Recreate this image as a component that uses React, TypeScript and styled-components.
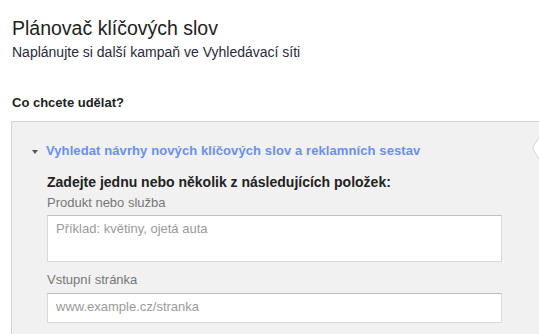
import React from "react";
import styled, { createGlobalStyle } from "styled-components";

const Global = createGlobalStyle`
  html, body { margin: 0; padding: 0; background: #fff; }
  body { font-family: Arial, "Liberation Sans", sans-serif; overflow: hidden; }
`;

const Page = styled.div`
  width: 539px;
  height: 334px;
  overflow: hidden;
  position: relative;
  padding: 17px 0 0 12px;
  box-sizing: border-box;
`;

const Title = styled.h1`
  margin: 0;
  font-size: 19.5px;
  font-weight: normal;
  color: #222;
  line-height: 22px;
`;

const Subtitle = styled.div`
  margin-top: 5px;
  font-size: 14px;
  color: #2a2a3a;
  line-height: 16px;
`;

const Question = styled.div`
  margin-top: 35px;
  font-size: 13px;
  font-weight: bold;
  color: #222;
  line-height: 16px;
`;

const Panel = styled.div`
  margin-top: 10px;
  margin-left: -1px;
  width: 560px;
  height: 260px;
  background: #f1f1f1;
  border: 1px solid #d4d4d4;
  box-sizing: border-box;
  padding: 21px 0 0 20px;
`;

const Toggle = styled.div`
  display: flex;
  align-items: center;
  gap: 8px;
  font-size: 13px;
  font-weight: bold;
  letter-spacing: 0.1px;
  color: #6b8ef5;
  line-height: 16px;
`;

const Caret = styled.span`
  width: 0;
  height: 0;
  border-left: 3.5px solid transparent;
  border-right: 3.5px solid transparent;
  border-top: 4px solid #555;
  margin-top: 1px;
`;

const Body = styled.div`
  padding-left: 15px;
  margin-top: 15px;
  display: flex;
  flex-direction: column;
`;

const Instruction = styled.div`
  font-size: 14px;
  font-weight: bold;
  color: #222;
  line-height: 16px;
`;

const Label = styled.div<{ $mt: number }>`
  margin-top: ${(p) => p.$mt}px;
  font-size: 13px;
  color: #777;
  line-height: 16px;
`;

const Field = styled.div<{ $h: number }>`
  margin-top: ${(p) => (p.$h > 40 ? 4 : 5)}px;
  width: 455px;
  height: ${(p) => p.$h}px;
  box-sizing: border-box;
  background: #fff;
  border: 1px solid #d9d9d9;
  border-top-color: #c0c0c0;
  padding: 5px 8px;
  font-size: 13px;
  color: #9a9a9a;
  line-height: 16px;
`;

const Pointer = styled.svg`
  position: absolute;
  right: 0;
  top: 137px;
`;

export default function App() {
  return (
    <>
      <Global />
      <Page>
        <Title>Plánovač klíčových slov</Title>
        <Subtitle>Naplánujte si další kampaň ve Vyhledávací síti</Subtitle>
        <Question>Co chcete udělat?</Question>
        <Panel>
          <Toggle>
            <Caret />
            Vyhledat návrhy nových klíčových slov a reklamních sestav
          </Toggle>
          <Body>
            <Instruction>Zadejte jednu nebo několik z následujících položek:</Instruction>
            <Label $mt={5}>Produkt nebo služba</Label>
            <Field $h={47}>Příklad: květiny, ojetá auta</Field>
            <Label $mt={10}>Vstupní stránka</Label>
            <Field $h={30}>www.example.cz/stranka</Field>
          </Body>
        </Panel>
        <Pointer width="7" height="22" viewBox="0 0 7 22">
          <polygon points="7,0 0,11 7,22" fill="#fff" />
          <polyline points="7,0 0.5,11 7,22" fill="none" stroke="#d4d4d4" strokeWidth="1" />
        </Pointer>
      </Page>
    </>
  );
}
